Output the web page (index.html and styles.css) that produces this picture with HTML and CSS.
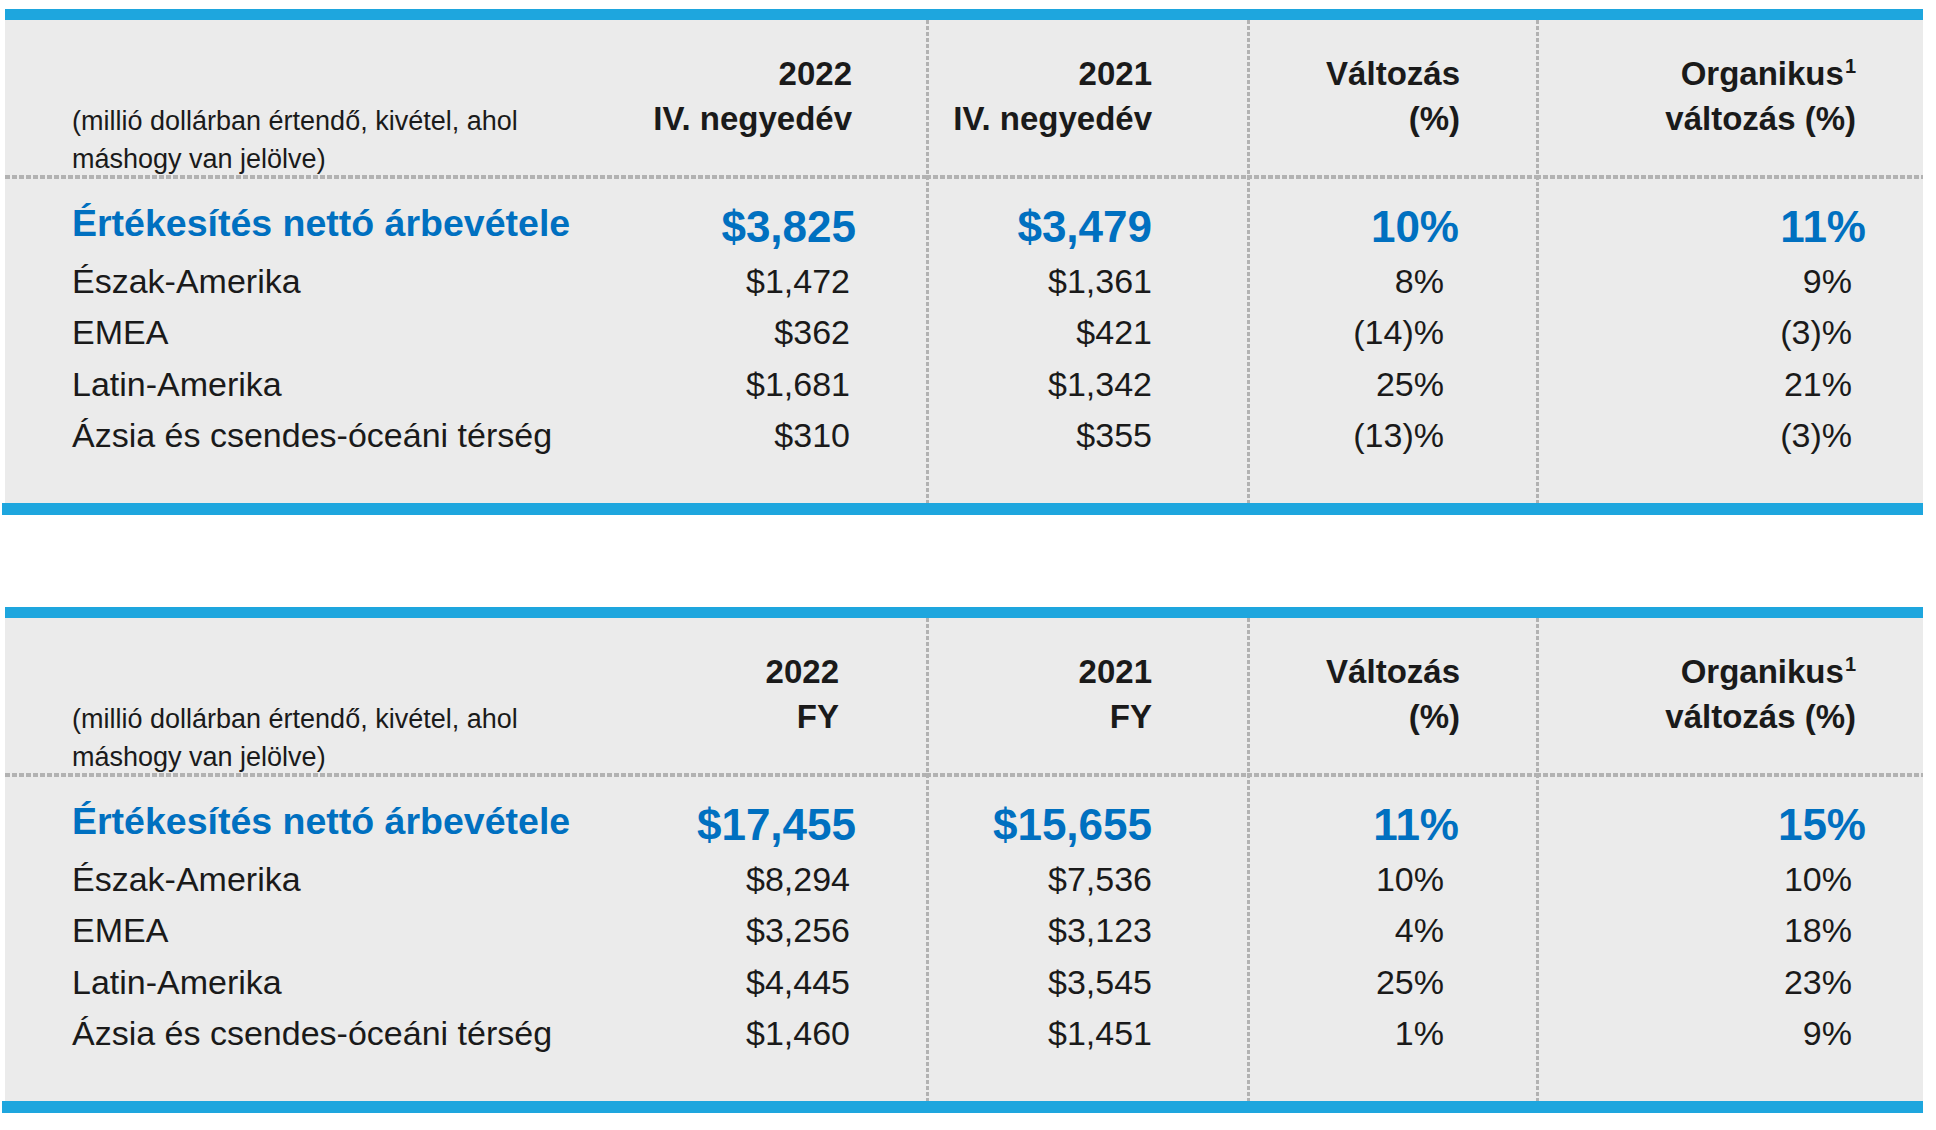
FILE: index.html
```html
<!DOCTYPE html>
<html lang="hu">
<head>
<meta charset="utf-8">
<title>Értékesítés nettó árbevétele</title>
<link rel="stylesheet" href="styles.css">
</head>
<body>
<div class="page">

  <section class="table">
    <div class="panel">
      <div class="col c-label">
        <div class="head"><p class="note">(millió dollárban értendő, kivétel, ahol<br>máshogy van jelölve)</p></div>
        <div class="body">
          <div class="cell big title">Értékesítés nettó árbevétele</div>
          <div class="cell">Észak-Amerika</div>
          <div class="cell">EMEA</div>
          <div class="cell">Latin-Amerika</div>
          <div class="cell">Ázsia és csendes-óceáni térség</div>
        </div>
      </div>
      <div class="col c-a">
        <div class="head"><div class="hd"><span>2022</span><span>IV. negyedév</span></div></div>
        <div class="body">
          <div class="cell big num">$3,825</div>
          <div class="cell">$1,472</div>
          <div class="cell">$362</div>
          <div class="cell">$1,681</div>
          <div class="cell">$310</div>
        </div>
      </div>
      <div class="col c-b">
        <div class="head"><div class="hd"><span>2021</span><span>IV. negyedév</span></div></div>
        <div class="body">
          <div class="cell big num">$3,479</div>
          <div class="cell">$1,361</div>
          <div class="cell">$421</div>
          <div class="cell">$1,342</div>
          <div class="cell">$355</div>
        </div>
      </div>
      <div class="col c-c">
        <div class="head"><div class="hd"><span>Változás</span><span>(%)</span></div></div>
        <div class="body">
          <div class="cell big num">10%</div>
          <div class="cell">8%</div>
          <div class="cell">(14)%</div>
          <div class="cell">25%</div>
          <div class="cell">(13)%</div>
        </div>
      </div>
      <div class="col c-d">
        <div class="head"><div class="hd"><span>Organikus<sup>1</sup></span><span>változás (%)</span></div></div>
        <div class="body">
          <div class="cell big num">11%</div>
          <div class="cell">9%</div>
          <div class="cell">(3)%</div>
          <div class="cell">21%</div>
          <div class="cell">(3)%</div>
        </div>
      </div>
    </div>
    <div class="rule"></div>
  </section>

  <section class="table fy">
    <div class="panel">
      <div class="col c-label">
        <div class="head"><p class="note">(millió dollárban értendő, kivétel, ahol<br>máshogy van jelölve)</p></div>
        <div class="body">
          <div class="cell big title">Értékesítés nettó árbevétele</div>
          <div class="cell">Észak-Amerika</div>
          <div class="cell">EMEA</div>
          <div class="cell">Latin-Amerika</div>
          <div class="cell">Ázsia és csendes-óceáni térség</div>
        </div>
      </div>
      <div class="col c-a">
        <div class="head"><div class="hd"><span>2022</span><span>FY</span></div></div>
        <div class="body">
          <div class="cell big num">$17,455</div>
          <div class="cell">$8,294</div>
          <div class="cell">$3,256</div>
          <div class="cell">$4,445</div>
          <div class="cell">$1,460</div>
        </div>
      </div>
      <div class="col c-b">
        <div class="head"><div class="hd"><span>2021</span><span>FY</span></div></div>
        <div class="body">
          <div class="cell big num">$15,655</div>
          <div class="cell">$7,536</div>
          <div class="cell">$3,123</div>
          <div class="cell">$3,545</div>
          <div class="cell">$1,451</div>
        </div>
      </div>
      <div class="col c-c">
        <div class="head"><div class="hd"><span>Változás</span><span>(%)</span></div></div>
        <div class="body">
          <div class="cell big num">11%</div>
          <div class="cell">10%</div>
          <div class="cell">4%</div>
          <div class="cell">25%</div>
          <div class="cell">1%</div>
        </div>
      </div>
      <div class="col c-d">
        <div class="head"><div class="hd"><span>Organikus<sup>1</sup></span><span>változás (%)</span></div></div>
        <div class="body">
          <div class="cell big num">15%</div>
          <div class="cell">10%</div>
          <div class="cell">18%</div>
          <div class="cell">23%</div>
          <div class="cell">9%</div>
        </div>
      </div>
    </div>
    <div class="rule"></div>
  </section>

</div>
</body>
</html>
```

FILE: styles.css
```css
* {
  box-sizing: border-box;
  margin: 0;
  padding: 0;
}

html, body {
  background: #ffffff;
}

body {
  font-family: "Liberation Sans", Arial, sans-serif;
  color: #1a1a1a;
}

.page {
  padding-top: 9px;
}

.table + .table {
  margin-top: 92px;
}

.panel {
  display: flex;
  margin-left: 5px;
  width: 1918px;
  height: 494px;
  border-top: 11px solid #1ea6de;
  background: #ebebeb;
}

.rule {
  margin-left: 2px;
  width: 1921px;
  height: 12px;
  background: #1ea6de;
}

.col {
  display: flex;
  flex-direction: column;
  flex: none;
}

.c-label { width: 595px; }
.c-a { width: 326px; }
.c-b { width: 321px; }
.c-c { width: 289px; }
.c-d { width: 387px; }

.c-b, .c-c, .c-d {
  background: repeating-linear-gradient(to bottom, #b2b2b2 0 4px, transparent 4px 6px) 0 0 / 3px 100% no-repeat;
}

.head {
  height: 159px;
  flex: none;
  background: repeating-linear-gradient(to right, #b2b2b2 0 5px, transparent 5px 7px) 0 100% / 100% 4px no-repeat;
}

.note {
  padding: 81.5px 0 0 67px;
  font-size: 27px;
  line-height: 38px;
  white-space: nowrap;
}

.hd {
  padding-top: 31px;
  font-size: 33px;
  font-weight: 700;
  line-height: 45px;
  text-align: right;
  white-space: nowrap;
}

.hd span {
  display: block;
}

.hd sup {
  font-size: 20px;
  line-height: 0;
  vertical-align: 12px;
  margin-left: 1px;
}

.cell {
  height: 51.5px;
  font-size: 34px;
  line-height: 51.5px;
  white-space: nowrap;
  text-align: right;
}

.c-label .cell {
  text-align: left;
  padding-left: 67px;
}

.cell.big {
  height: 76.5px;
  line-height: 50px;
  font-weight: 700;
  color: #0070c0;
}

.cell.title {
  padding-top: 19px;
  font-size: 37.5px;
}

.cell.num {
  padding-top: 23px;
  font-size: 44px;
}

/* column-specific right insets */
.c-a .hd { padding-right: 74px; }
.fy .c-a .hd { padding-right: 87px; }
.c-a .cell { padding-right: 76px; }
.c-a .cell.big { padding-right: 70px; }

.c-b .hd { padding-right: 95px; }
.c-b .cell { padding-right: 95px; }
.c-b .cell.big { padding-right: 95px; }

.c-c .hd { padding-right: 76px; }
.c-c .cell { padding-right: 92px; }
.c-c .cell.big { padding-right: 77px; }

.c-d .hd { padding-right: 67px; }
.c-d .cell { padding-right: 71px; }
.c-d .cell.big { padding-right: 57px; }
```
